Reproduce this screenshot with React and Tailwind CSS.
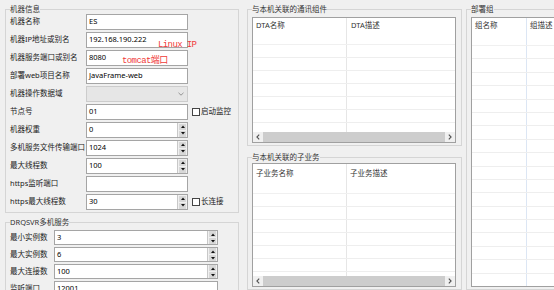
const lineGray = 'border-[#a5a5a5]'

function GroupBox({ title, className, children }) {
  return (
    <fieldset className={`border border-[#d5d5d5] px-[4px] ${className}`}>
      <legend className="px-0 leading-[10px] text-[#333]">{title}</legend>
      {children}
    </fieldset>
  )
}

function TextBox({ value, w = 'w-[102px]', h = 'h-4' }) {
  return (
    <div className={`${w} ${h} shrink-0 border ${lineGray} bg-white pl-[2px] flex items-center text-black`}>
      {value}
    </div>
  )
}

function Arrow({ up }) {
  return (
    <div className="h-[6px] bg-[#d8d8d8] flex items-center justify-center">
      <svg width="4" height="3" viewBox="0 0 4 3">
        {up ? <path d="M0 3L2 0.5L4 3Z" fill="#111" /> : <path d="M0 0L2 2.5L4 0Z" fill="#111" />}
      </svg>
    </div>
  )
}

function Spin({ value, w = 'w-[102px]', h = 'h-4' }) {
  return (
    <div className={`${w} ${h} shrink-0 border ${lineGray} bg-[#f0f0f0] flex`}>
      <div className="flex-1 bg-white pl-[2px] flex items-center border-r border-[#c8c8c8] text-black">{value}</div>
      <div className="w-[9px] flex flex-col justify-center gap-[1px] px-[1px]">
        <Arrow up />
        <Arrow />
      </div>
    </div>
  )
}

function Check({ label }) {
  return (
    <div className="ml-[4px] flex items-center">
      <div className="w-[8px] h-[8px] border border-[#444] bg-white" />
      <span className="ml-[1px] text-[#222]">{label}</span>
    </div>
  )
}

function Row({ label, children, lw = 'w-[76px]', h = 'h-4' }) {
  return (
    <div className={`flex items-center ${h}`}>
      <span className={`${lw} shrink-0 text-[#222] whitespace-nowrap`}>{label}</span>
      {children}
    </div>
  )
}

function ScrollBar() {
  return (
    <div className="h-[10px] shrink-0 flex bg-[#f0f0f0]">
      <div className="w-[10px] flex items-center justify-center">
        <svg width="4" height="6" viewBox="0 0 4 6">
          <path d="M3.2 0.6L0.9 3L3.2 5.4" stroke="#505050" strokeWidth="1.1" fill="none" />
        </svg>
      </div>
      <div className="flex-1 bg-[#cdcdcd]" />
      <div className="w-[10px] flex items-center justify-center">
        <svg width="4" height="6" viewBox="0 0 4 6">
          <path d="M0.8 0.6L3.1 3L0.8 5.4" stroke="#505050" strokeWidth="1.1" fill="none" />
        </svg>
      </div>
    </div>
  )
}

function Grid({ cols, firstW, headH, padT, rowH, rows, divider, scroll, h, pl2 = 'pl-[4px]' }) {
  const list = Array.from({ length: rows })
  return (
    <div className={`${h} border border-[#a0a0a0] bg-white flex flex-col overflow-hidden`}>
      <div className="flex-1 min-h-0 overflow-hidden">
        <div className={`flex ${headH} border-b border-[#f0f0f0]`}>
          <div className={`${firstW} shrink-0 border-r ${divider} pl-[3px] ${padT} leading-[10px] text-[#333]`}>{cols[0]}</div>
          <div className={`flex-1 ${pl2} ${padT} leading-[10px] text-[#333] whitespace-nowrap`}>{cols[1]}</div>
        </div>
        {list.map((_, i) => (
          <div key={i} className={`flex ${rowH} border-b border-[#eeeeee]`}>
            <div className={`${firstW} shrink-0 border-r ${divider}`} />
            <div className="flex-1" />
          </div>
        ))}
      </div>
      {scroll && <ScrollBar />}
    </div>
  )
}

export default function App() {
  return (
    <div className="relative w-[554px] h-[290px] overflow-hidden bg-[#f0f0f0] flex text-[7.5px] font-['Noto_Sans','Noto_Sans_CJK_SC',sans-serif]">
      {/* left column */}
      <div className="ml-[5px] w-[234px] shrink-0 flex flex-col">
        <GroupBox title="机器信息" className="mt-[4px] pb-[2px]">
          <div className="flex flex-col gap-[2px]">
            <Row label="机器名称"><TextBox value="ES" /></Row>
            <Row label="机器IP地址或别名"><TextBox value="192.168.190.222" /></Row>
            <Row label="机器服务端口或别名"><TextBox value="8080" /></Row>
            <Row label="部署web项目名称"><TextBox value="JavaFrame-web" /></Row>
            <Row label="机器操作数据域">
              <div className="w-[102px] h-4 border border-[#cccccc] bg-[#e6e6e6] flex items-center justify-end pr-[3px]">
                <svg width="6" height="4" viewBox="0 0 6 4">
                  <path d="M0.5 0.8L3 3.2L5.5 0.8" stroke="#8a8a8a" strokeWidth="0.9" fill="none" />
                </svg>
              </div>
            </Row>
            <Row label="节点号"><TextBox value="01" /><Check label="启动监控" /></Row>
            <Row label="机器权重"><Spin value="0" /></Row>
            <Row label="多机服务文件传输端口"><Spin value="1024" /></Row>
            <Row label="最大线程数"><Spin value="100" /></Row>
            <Row label="https监听端口"><TextBox value="" /></Row>
            <Row label="https最大线程数"><Spin value="30" /><Check label="长连接" /></Row>
          </div>
        </GroupBox>

        <GroupBox title="DRQSVR多机服务" className="mt-[4px] flex-1 pb-[2px]">
          <div className="mt-[3px] flex flex-col gap-[2px]">
            <Row label="最小实例数" lw="w-[44px]" h="h-[15px]"><Spin value="3" w="w-[164px]" h="h-[15px]" /></Row>
            <Row label="最大实例数" lw="w-[44px]" h="h-[15px]"><Spin value="6" w="w-[164px]" h="h-[15px]" /></Row>
            <Row label="最大连接数" lw="w-[44px]" h="h-[15px]"><Spin value="100" w="w-[164px]" h="h-[15px]" /></Row>
            <Row label="监听端口" lw="w-[44px]" h="h-[15px]"><TextBox value="12001" w="w-[164px]" h="h-[15px]" /></Row>
          </div>
        </GroupBox>
      </div>

      {/* middle column */}
      <div className="ml-[8px] w-[215px] shrink-0 flex flex-col">
        <GroupBox title="与本机关联的通讯组件" className="mt-[4px] pr-[5px] pb-[2px]">
          <div className="mt-[3px]">
            <Grid
              cols={['DTA名称', 'DTA描述']}
              firstW="w-[94px]"
              headH="h-[27px]"
              padT="pt-[2px]"
              rowH="h-[13px]"
              rows={8}
              divider="border-[#e6e6e6]"
              scroll
              h="h-[126px]"
            />
          </div>
        </GroupBox>
        <GroupBox title="与本机关联的子业务" className="mt-[6px] pr-[5px] flex-1">
          <div className="mt-[1px]">
            <Grid
              cols={['子业务名称', '子业务描述']}
              firstW="w-[94px]"
              headH="h-[30px]"
              padT="pt-[4px]"
              rowH="h-[13px]"
              rows={8}
              divider="border-[#e6e6e6]"
              scroll
              h="h-[124px]"
              pl2="pl-[3px]"
            />
          </div>
        </GroupBox>
      </div>

      {/* right column */}
      <div className="ml-[4px] w-[120px] shrink-0 flex flex-col">
        <GroupBox title="部署组" className="mt-[4px] px-[3px] flex-1">
          <div className="mt-[3px]">
            <Grid
              cols={['组名称', '组描述']}
              firstW="w-[55px]"
              headH="h-[28px]"
              padT="pt-[2px]"
              rowH="h-[13.4px]"
              rows={19}
              divider="border-[#dce6f4]"
              h="h-[270px]"
              pl2="pl-[3px]"
            />
          </div>
        </GroupBox>
      </div>

      {/* red annotations */}
      <span className="absolute left-[158px] top-[40px] text-[9px] leading-[10px] tracking-[-0.6px] text-[#f03a3a] font-['Liberation_Mono','Noto_Sans_CJK_SC',monospace]">
        Linux IP
      </span>
      <span className="absolute left-[122px] top-[56px] text-[9px] leading-[10px] tracking-[-0.6px] text-[#f03a3a] font-['Liberation_Mono','Noto_Sans_CJK_SC',monospace]">
        tomcat端口
      </span>
    </div>
  )
}
